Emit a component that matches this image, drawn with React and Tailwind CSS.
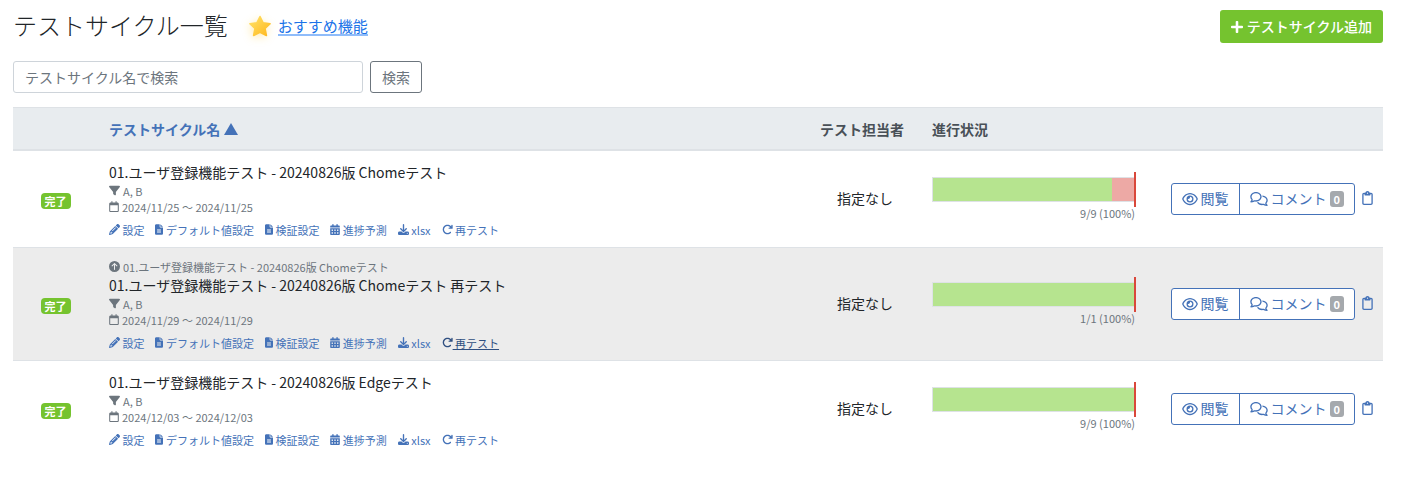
import React, { useState } from 'react';
import { FaPlus } from 'react-icons/fa';
import {
  FaFilter,
  FaRegCalendar,
  FaPencil,
  FaFileLines,
  FaCalendarDays,
  FaDownload,
  FaArrowRotateRight,
  FaCircleArrowUp,
  FaRegEye,
  FaRegComments,
  FaRegClipboard,
} from 'react-icons/fa6';

const cycles = [
  {
    id: 1,
    name: '01.ユーザ登録機能テスト - 20240826版 Chomeテスト',
    tags: 'A, B',
    period: '2024/11/25 〜 2024/11/25',
    passed: 8,
    failed: 1,
    total: 9,
  },
  {
    id: 2,
    parent: '01.ユーザ登録機能テスト - 20240826版 Chomeテスト',
    name: '01.ユーザ登録機能テスト - 20240826版 Chomeテスト 再テスト',
    tags: 'A, B',
    period: '2024/11/29 〜 2024/11/29',
    passed: 1,
    failed: 0,
    total: 1,
    active: true,
  },
  {
    id: 3,
    name: '01.ユーザ登録機能テスト - 20240826版 Edgeテスト',
    tags: 'A, B',
    period: '2024/12/03 〜 2024/12/03',
    passed: 9,
    failed: 0,
    total: 9,
  },
];

const actions = [
  { label: '設定', Icon: FaPencil, size: 'w-[11px]' },
  { label: 'デフォルト値設定', Icon: FaFileLines, size: 'w-2' },
  { label: '検証設定', Icon: FaFileLines, size: 'w-2' },
  { label: '進捗予測', Icon: FaCalendarDays, size: 'w-[10px]' },
  { label: 'xlsx', Icon: FaDownload, size: 'w-[11px]' },
  { label: '再テスト', Icon: FaArrowRotateRight, size: 'w-[11px]', retest: true },
];

function StarIcon() {
  return (
    <svg viewBox="0 0 24 24" className="size-6 drop-shadow-[-1px_2px_4px_rgba(255,193,7,0.3)]" aria-hidden="true">
      <defs>
        <linearGradient id="starFill" x1="0" y1="0" x2="1" y2="1">
          <stop offset="0" stopColor="#ffe36a" />
          <stop offset="1" stopColor="#ffb71c" />
        </linearGradient>
      </defs>
      <path
        d="M12 1.5l3.1 6.3 7 .9-5.1 4.8 1.4 7-6.4-3.3-6.4 3.3 1.4-7-5.1-4.8 7-.9z"
        fill="url(#starFill)"
        stroke="url(#starFill)"
        strokeWidth="1.6"
        strokeLinejoin="round"
      />
    </svg>
  );
}

function ProgressBar({ passed, failed, total }) {
  const done = passed + failed;
  return (
    <div>
      <div className="relative flex h-[25px] border border-[#dee2e6] pr-px">
        <div className="bg-[#b6e48f]" style={{ width: `${(passed / total) * 100}%` }} />
        <div className="bg-[#eda9a5]" style={{ width: `${(failed / total) * 100}%` }} />
        {/* today marker */}
        <div className="absolute -top-1.5 -right-px h-[35px] w-0.5 bg-[#d9483b]" />
      </div>
      <div className="mt-[3px] pr-px text-right text-[11px] leading-4 text-[#6c757d]">
        {done}/{total} ({Math.round((done / total) * 100)}%)
      </div>
    </div>
  );
}

function CycleRow({ cycle }) {
  return (
    <tr className={`border-t border-[#dee2e6] ${cycle.active ? 'bg-[#ececec]' : ''}`}>
      <td className="pt-1 text-center">
        <span className="inline-block rounded bg-[#75c32f] px-1 text-[11px] leading-4 font-bold text-white">完了</span>
      </td>
      <td className="px-[11px] pt-[11px] pb-[9px]">
        {cycle.parent && (
          <div className="flex items-center gap-[3px] text-[11px] leading-4 text-[#6c757d]">
            <FaCircleArrowUp className="size-[11px]" />
            {cycle.parent}
          </div>
        )}
        <div className="leading-[21px]">{cycle.name}</div>
        <div className="flex items-center gap-[3px] text-[11px] leading-4 text-[#6c757d]">
          <FaFilter className="size-[11px]" />
          {cycle.tags}
        </div>
        <div className="flex items-center gap-[3px] text-[11px] leading-4 text-[#6c757d]">
          <FaRegCalendar className="h-[11px] w-[10px]" />
          {cycle.period}
        </div>
        <div className="mt-[7px] flex gap-[11px] text-[11px] leading-4">
          {actions.map(({ label, Icon, size, retest }) => (
            <a
              key={label}
              href="#"
              className={`flex items-center ${retest && cycle.active ? 'text-[#2f4f80]' : 'text-[#4472b8]'}`}
            >
              <Icon className={`h-[11px] ${size}`} />
              <span className={`whitespace-pre ${retest && cycle.active ? 'underline' : ''}`}>{` ${label}`}</span>
            </a>
          ))}
        </div>
      </td>
      <td className="text-center">指定なし</td>
      <td className="px-[11px]">
        <ProgressBar passed={cycle.passed} failed={cycle.failed} total={cycle.total} />
      </td>
      <td className="pr-[10px]">
        <div className="flex items-center justify-end gap-[7px] text-[#4472b8]">
          <div className="flex h-8 divide-x divide-[#4472b8] rounded-[3px] border border-[#4472b8] bg-white">
            <button type="button" className="flex items-center gap-[3px] px-[10px]">
              <FaRegEye className="h-[14px] w-4" />
              閲覧
            </button>
            <button type="button" className="flex items-center gap-[3px] px-[10px]">
              <FaRegComments className="h-[14px] w-[18px]" />
              コメント
              <span className="rounded-[3px] bg-[#a5a9ad] px-1 text-[11px] leading-4 font-bold text-white">0</span>
            </button>
          </div>
          <button type="button" aria-label="コピー" className="pb-0.5">
            <FaRegClipboard className="h-[14px] w-[11px]" />
          </button>
        </div>
      </td>
    </tr>
  );
}

function App() {
  const [keyword, setKeyword] = useState('');

  return (
    <div className="bg-white pt-[10px] pr-[34px] pb-9 pl-[13px] font-['Noto_Sans_CJK_JP',sans-serif] text-[14px] leading-[21px] text-[#212529]">
      <div className="flex items-center justify-between">
        <div className="flex items-center">
          <h1 className="pb-1 text-[24px] leading-7 font-light">テストサイクル一覧</h1>
          <div className="ml-5 flex items-center gap-[6px]">
            <StarIcon />
            <a href="#" className="border-b-2 border-[#8fbcfa] text-[15px] leading-4 text-[#1a73e8]">
              おすすめ機能
            </a>
          </div>
        </div>
        <button type="button" className="flex h-[33px] items-center gap-1 rounded-[3px] bg-[#75c32f] px-[11px] font-medium text-white">
          <FaPlus className="h-[14px] w-3" />
          テストサイクル追加
        </button>
      </div>

      <form className="mt-[18px] flex gap-[7px]" onSubmit={(e) => e.preventDefault()}>
        <input
          type="text"
          aria-label="テストサイクル名で検索"
          placeholder="テストサイクル名で検索"
          value={keyword}
          onChange={(e) => setKeyword(e.target.value)}
          className="h-8 w-[350px] rounded-[3px] border border-[#ced4da] px-[11px] placeholder:text-[#6c757d]"
        />
        <button type="submit" className="h-8 rounded-[3px] border border-[#6c757d] px-[11px] text-[#6c757d]">
          検索
        </button>
      </form>

      <table className="mt-[14px] w-full table-fixed">
        <thead>
          <tr className="h-[42px] border-t border-b-2 border-[#dee2e6] bg-[#e8ecef] text-[#495057]">
            <th className="w-[85px]" />
            <th className="px-[11px] pt-0.5 text-left">
              <a href="#" className="flex items-center gap-1 text-[#4472b8]">
                テストサイクル名
                <svg viewBox="0 0 14 12" className="h-3 w-[14px]" fill="currentColor" aria-hidden="true">
                  <path d="M7 0l7 12H0z" />
                </svg>
              </a>
            </th>
            <th className="w-[112px] px-[11px] pt-0.5 text-left">テスト担当者</th>
            <th className="w-[226px] px-[11px] pt-0.5 text-left">進行状況</th>
            <th className="w-[236px]" />
          </tr>
        </thead>
        <tbody>
          {cycles.map((cycle) => (
            <CycleRow key={cycle.id} cycle={cycle} />
          ))}
        </tbody>
      </table>
    </div>
  );
}

export default App;
